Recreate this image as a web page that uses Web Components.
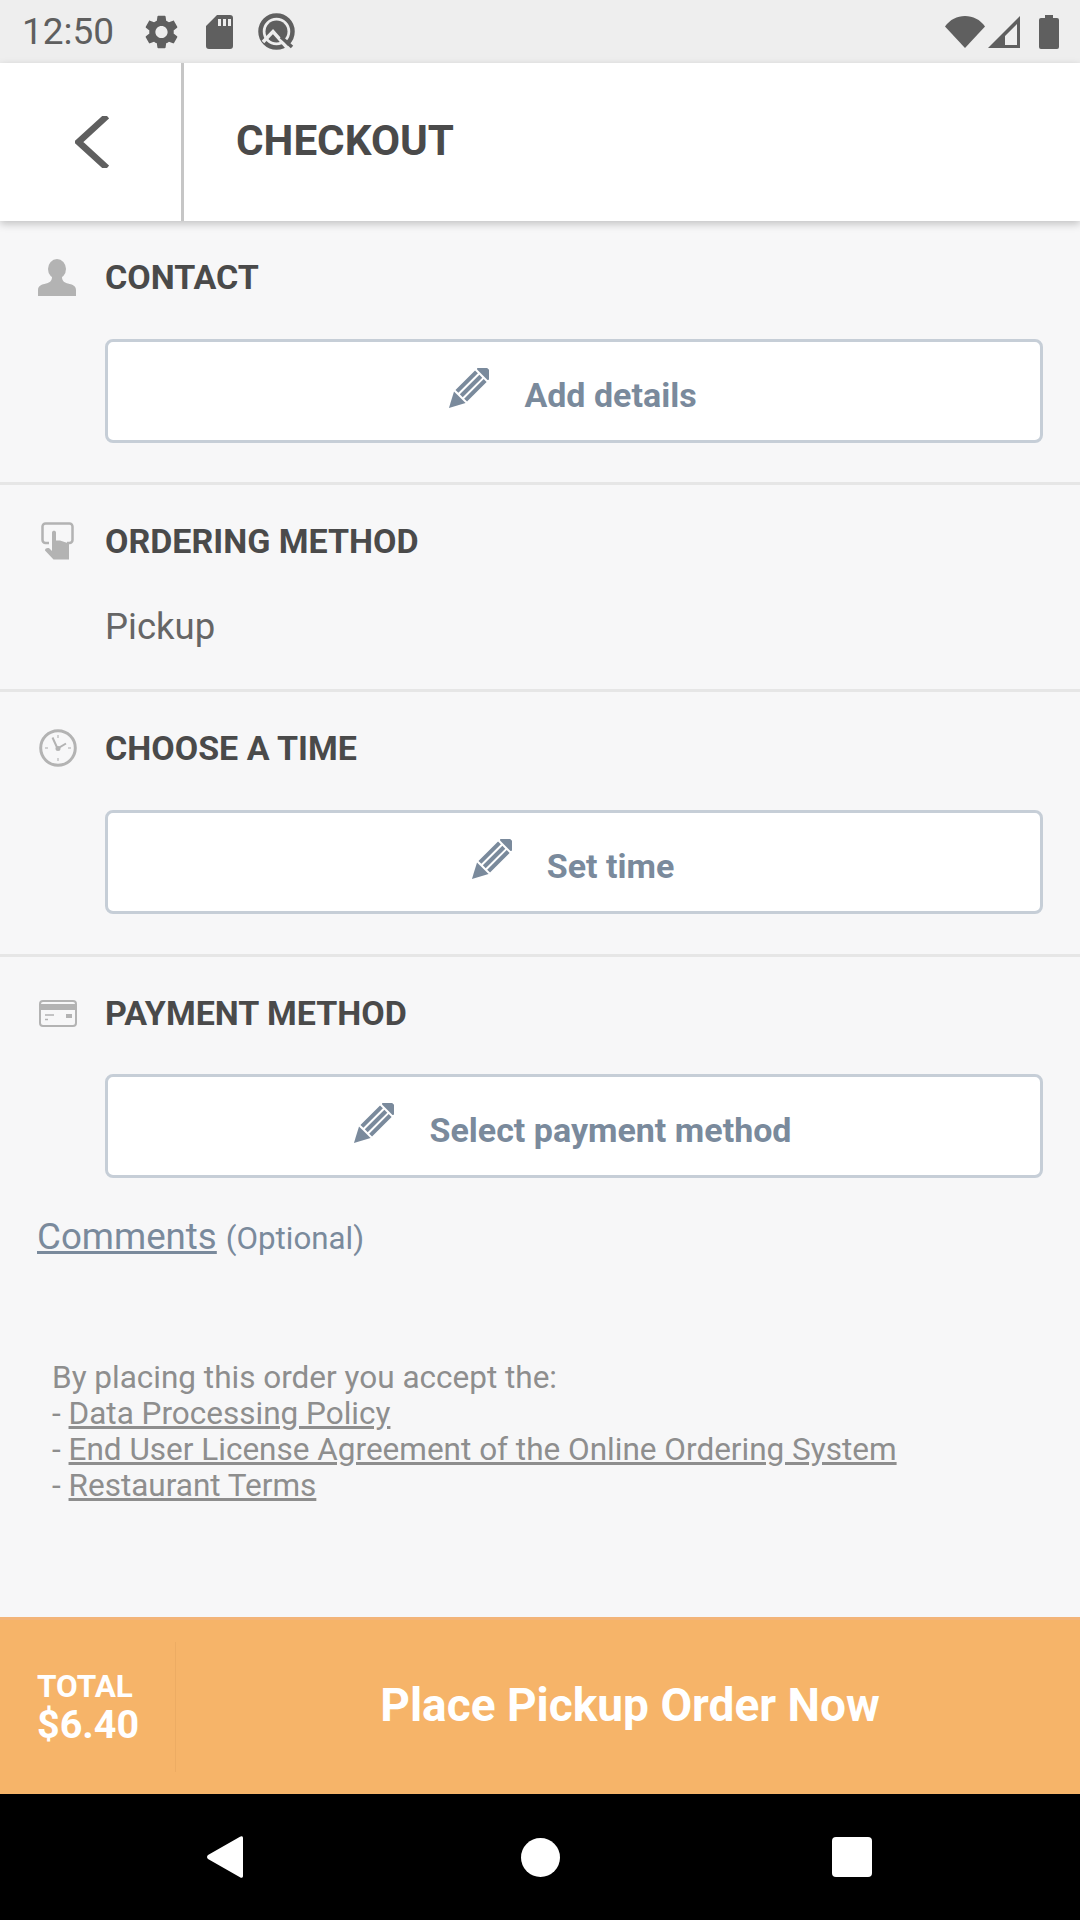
<!DOCTYPE html>
<html>
<head>
<meta charset="utf-8">
<title>Checkout</title>
<style>
  html, body { margin: 0; padding: 0; }
  body { font-family: Roboto, "Liberation Sans", sans-serif; background: #f7f7f8; }
</style>
</head>
<body>
<checkout-page>
  <status-bar slot="status"></status-bar>
  <app-header slot="header" title="CHECKOUT"></app-header>

  <checkout-section heading="CONTACT" icon="person" style="padding-bottom:39px">
    <edit-button>Add details</edit-button>
  </checkout-section>
  <checkout-section heading="ORDERING METHOD" icon="hand">
    <span class="value">Pickup</span>
  </checkout-section>
  <checkout-section heading="CHOOSE A TIME" icon="clock">
    <edit-button>Set time</edit-button>
  </checkout-section>
  <checkout-section heading="PAYMENT METHOD" icon="card" last>
    <edit-button>Select payment method</edit-button>
  </checkout-section>

  <comments-link></comments-link>
  <terms-note></terms-note>

  <order-footer slot="footer" total="$6.40">Place Pickup Order Now</order-footer>
  <nav-bar slot="nav"></nav-bar>
</checkout-page>

<script>
const ICONS = {
  person: `<svg width="38" height="37" viewBox="0 0 38 37"><ellipse cx="19" cy="10" rx="9" ry="10" fill="#b3b3b3"/><path d="M0 37V31C0 26.500 4 25.500 8 24.500C11 23.700 14 22.500 14 18H24C24 22.500 27 23.700 30 24.500C34 25.500 38 26.500 38 31V37Z" fill="#b3b3b3"/></svg>`,
  hand: `<svg width="33" height="38" viewBox="0 0 33 38" style="margin-left:3px"><path d="M8 21H4.500A3 3 0 0 1 1.500 18V4.500A3 3 0 0 1 4.500 1.500H28.500A3 3 0 0 1 31.500 4.500V18A3 3 0 0 1 28.500 21H26" fill="none" stroke="#b3b3b3" stroke-width="2.500"/><path d="M11 10.500C11 8 15 8 15 10.500V18.500L19 18.500L28 21.500V37.500H12.500L4 28.500C4 26 7 25.500 8.500 26.500L11 29Z" fill="#b3b3b3"/></svg>`,
  clock: `<svg width="38" height="38" viewBox="0 0 38 38" style="margin-left:1px"><circle cx="19" cy="19" r="17.300" fill="none" stroke="#b3b3b3" stroke-width="3"/><path d="M19 6V9M19 29V32M6 19H9M29 19H32" stroke="#c4c4c4" stroke-width="1.500"/><path d="M13.500 8.500L18.500 19.500L27 14.500" fill="none" stroke="#b3b3b3" stroke-width="2"/><circle cx="19" cy="19.500" r="2.500" fill="#b3b3b3"/></svg>`,
  card: `<svg width="38" height="27" viewBox="0 0 38 27" style="margin-left:1px"><rect x="1" y="1" width="36" height="25" rx="3" fill="none" stroke="#b3b3b3" stroke-width="2"/><rect x="1" y="4" width="36" height="6" fill="#b3b3b3"/><path d="M6 15H15M6 19.500H9" stroke="#b3b3b3" stroke-width="1.500"/><rect x="27" y="14" width="6" height="4" fill="#b3b3b3"/></svg>`
};
const PENCIL = `<svg width="41" height="41" viewBox="0 0 40 40"><g transform="rotate(45 20 20)" fill="#7a8a9c"><rect x="12" y="-7" width="16" height="8" rx="1.500"/><path d="M12 3H16V30H12ZM18 3H22V30H18ZM24 3H28V30H24Z"/><path d="M12 32H28L20 47Z"/></g></svg>`;

class StatusBar extends HTMLElement {
  connectedCallback() {
    this.attachShadow({ mode: 'open' }).innerHTML = `
      <style>
        :host { display: flex; align-items: center; height: 63px; background: #eeeeee; color: #5f5f5f; box-sizing: border-box; padding: 0 21px 0 22px; }
        .time { font-size: 37px; width: 123px; line-height: 65px; }
        svg { display: block; fill: #5f5f5f; }
        .left { display: flex; align-items: center; gap: 28px; flex: 1; }
        .left .q { margin-left: -3px; }
        .right { display: flex; align-items: center; }
      </style>
      <span class="time">12:50</span>
      <div class="left">
        <svg width="33" height="34" viewBox="2.600 2 18.800 20"><path d="M19.140 12.940c.04-.3.06-.61.06-.94 0-.32-.02-.64-.07-.94l2.030-1.580c.18-.14.23-.41.12-.61l-1.920-3.320c-.12-.22-.37-.29-.59-.22l-2.390.96c-.5-.38-1.030-.7-1.620-.94l-.36-2.540c-.04-.24-.24-.41-.48-.41h-3.840c-.24 0-.43.17-.47.41l-.36 2.540c-.59.24-1.130.57-1.620.94l-2.390-.96c-.22-.08-.47 0-.59.22L2.740 8.870c-.12.21-.08.47.12.61l2.030 1.580c-.05.3-.09.63-.09.94s.02.64.07.94l-2.030 1.580c-.18.14-.23.41-.12.61l1.920 3.320c.12.22.37.29.59.22l2.390-.96c.5.38 1.030.7 1.620.94l.36 2.540c.05.24.24.41.48.41h3.840c.24 0 .44-.17.47-.41l.36-2.540c.59-.24 1.130-.56 1.620-.94l2.390.96c.22.08.47 0 .59-.22l1.920-3.320c.12-.22.07-.47-.12-.61l-2.010-1.580zM12 15.600c-1.980 0-3.600-1.620-3.600-3.600s1.620-3.600 3.600-3.600 3.600 1.620 3.600 3.600-1.620 3.600-3.600 3.600z"/></svg>
        <svg width="27" height="34" viewBox="0 0 27 34"><path fill-rule="evenodd" d="M11 0H24A3 3 0 0 1 27 3V31A3 3 0 0 1 24 34H3A3 3 0 0 1 0 31V11ZM12 4V11H15V4ZM17 4V11H20V4ZM22 4V11H25V4Z"/></svg>
        <svg class="q" width="37" height="37" viewBox="0 0 37 37"><circle cx="18.500" cy="18.500" r="16" fill="none" stroke="#5f5f5f" stroke-width="4.500"/><circle cx="18.500" cy="18.500" r="11"/><path d="M5 29L15 18.500L32 38" fill="none" stroke="#eeeeee" stroke-width="3.500"/><path d="M23 24L34 34" stroke="#5f5f5f" stroke-width="3.500"/></svg>
      </div>
      <div class="right">
        <svg width="40" height="32" viewBox="0 0 40 32" style="margin-right:3px"><path d="M0 10.500C5 3.500 12 0 20 0S35 3.500 40 10.500L20 32Z"/></svg>
        <svg width="32" height="32" viewBox="0 0 32 32" style="margin-right:19px"><path fill-rule="evenodd" d="M32 0V32H0ZM29 8L17 20V29H29Z"/></svg>
        <svg width="20" height="34" viewBox="0 0 20 34"><path d="M6 0H14V3H18A2 2 0 0 1 20 5V32A2 2 0 0 1 18 34H2A2 2 0 0 1 0 32V5A2 2 0 0 1 2 3H6Z"/></svg>
      </div>`;
  }
}

class AppHeader extends HTMLElement {
  connectedCallback() {
    this.attachShadow({ mode: 'open' }).innerHTML = `
      <style>
        :host { display: flex; height: 158px; background: #fff; box-shadow: 0 3px 8px rgba(0,0,0,.22); position: relative; z-index: 2; }
        .back { width: 181px; border-right: 3px solid #c6c6c6; display: flex; align-items: center; }
        .back svg { margin-left: 75px; display: block; }
        h1 { margin: 0 0 0 52px; font-size: 42.200px; font-weight: 700; color: #4a4a4a; line-height: 155px; }
      </style>
      <div class="back"><svg width="34" height="52" viewBox="0 0 34 52"><path d="M32 0L3.500 26L32 52" fill="none" stroke="#5f5f5f" stroke-width="6.500"/></svg></div>
      <h1>${this.getAttribute('title')}</h1>`;
  }
}

class CheckoutSection extends HTMLElement {
  connectedCallback() {
    this.attachShadow({ mode: 'open' }).innerHTML = `
      <style>
        :host { display: block; padding: 37px 37px 40px 38px; border-bottom: 3px solid #e6e6e6; }
        :host([last]) { border-bottom: none; padding-bottom: 0; }
        :host([last]) .body { margin-top: 42px; }
        .head { display: flex; align-items: center; height: 38px; }
        .ico { width: 67px; display: flex; }
        h2 { margin: 0; font-size: 34px; font-weight: 700; color: #4a4a4a; line-height: 38px; }
        .body { margin: 43px 0 0 67px; }
        ::slotted(.value) { display: block; font-size: 36.500px; line-height: 42px; color: #666; padding-top: 2.500px; margin-bottom: 1.500px; }
      </style>
      <div class="head"><div class="ico">${ICONS[this.getAttribute('icon')]}</div><h2>${this.getAttribute('heading')}</h2></div>
      <div class="body"><slot></slot></div>`;
  }
}

class EditButton extends HTMLElement {
  connectedCallback() {
    this.attachShadow({ mode: 'open' }).innerHTML = `
      <style>
        :host { display: flex; align-items: center; justify-content: center; gap: 35px; height: 104px; box-sizing: border-box; padding-right: 3px; background: #fff; border: 3px solid #c6ced7; border-radius: 8px; color: #7a8a9c; font-size: 34px; font-weight: 700; }
        svg { display: block; margin-top: -5px; }
        span { padding-top: 8px; }
      </style>
      ${PENCIL}<span><slot></slot></span>`;
  }
}

class CommentsLink extends HTMLElement {
  connectedCallback() {
    this.attachShadow({ mode: 'open' }).innerHTML = `
      <style>
        :host { display: block; padding: 34px 37px 0; color: #7a8a9c; line-height: 50px; }
        a { font-size: 36.700px; text-decoration: underline; color: inherit; }
        span { font-size: 31.300px; margin-left: 5px; }
      </style>
      <a href="#comments">Comments</a> <span>(Optional)</span>`;
  }
}

class TermsNote extends HTMLElement {
  connectedCallback() {
    this.attachShadow({ mode: 'open' }).innerHTML = `
      <style>
        :host { display: block; padding: 91px 52px 0; font-size: 31.500px; line-height: 36px; color: #8e8e8e; }
        a { color: inherit; text-decoration: underline; }
        div { height: 36px; }
      </style>
      <div>By placing this order you accept the:</div>
      <div>- <a href="#dpp">Data Processing Policy</a></div>
      <div>- <a href="#eula">End User License Agreement of the Online Ordering System</a></div>
      <div>- <a href="#terms">Restaurant Terms</a></div>`;
  }
}

class OrderFooter extends HTMLElement {
  connectedCallback() {
    this.attachShadow({ mode: 'open' }).innerHTML = `
      <style>
        :host { display: flex; align-items: center; height: 177px; box-sizing: border-box; background: #f6b469; border-top: 3px solid #f3b478; color: #fff; font-weight: 700; }
        .total { width: 176px; height: 130px; box-sizing: border-box; padding-left: 37px; border-right: 1px solid #edac63; display: flex; flex-direction: column; justify-content: center; }
        .label { font-size: 31.500px; line-height: 34px; margin-top: 1px; }
        .amount { font-size: 39.500px; line-height: 42px; }
        .cta { flex: 1; text-align: center; font-size: 46px; padding: 0 0 5px 4px; }
      </style>
      <div class="total"><span class="label">TOTAL</span><span class="amount">${this.getAttribute('total')}</span></div>
      <div class="cta"><slot></slot></div>`;
  }
}

class NavBar extends HTMLElement {
  connectedCallback() {
    this.attachShadow({ mode: 'open' }).innerHTML = `
      <style>
        :host { display: flex; height: 126px; background: #000; align-items: center; box-sizing: border-box; padding-left: 207px; }
        svg { display: block; fill: #fff; flex: none; }
        .home { margin-left: 278px; }
        .recent { margin-left: 272px; }
      </style>
      <svg width="36" height="42" viewBox="0 0 36 42"><path d="M33 .800C34.500 -.400 36 .200 36 2V40C36 41.800 34.500 42.400 33 41.200L1 23C-.300 22 -.300 20 1 19Z"/></svg>
      <svg class="home" width="39" height="39" viewBox="0 0 39 39"><circle cx="19.500" cy="19.500" r="19.500"/></svg>
      <svg class="recent" width="40" height="40" viewBox="0 0 40 40"><rect width="40" height="40" rx="4"/></svg>`;
  }
}

class CheckoutPage extends HTMLElement {
  connectedCallback() {
    this.attachShadow({ mode: 'open' }).innerHTML = `
      <style>
        :host { display: flex; flex-direction: column; width: 1080px; height: 1920px; background: #f7f7f8; overflow: hidden; }
        main { flex: 1; min-height: 0; }
      </style>
      <slot name="status"></slot>
      <slot name="header"></slot>
      <main><slot></slot></main>
      <slot name="footer"></slot>
      <slot name="nav"></slot>`;
  }
}

customElements.define('status-bar', StatusBar);
customElements.define('app-header', AppHeader);
customElements.define('checkout-section', CheckoutSection);
customElements.define('edit-button', EditButton);
customElements.define('comments-link', CommentsLink);
customElements.define('terms-note', TermsNote);
customElements.define('order-footer', OrderFooter);
customElements.define('nav-bar', NavBar);
customElements.define('checkout-page', CheckoutPage);
</script>
</body>
</html>
